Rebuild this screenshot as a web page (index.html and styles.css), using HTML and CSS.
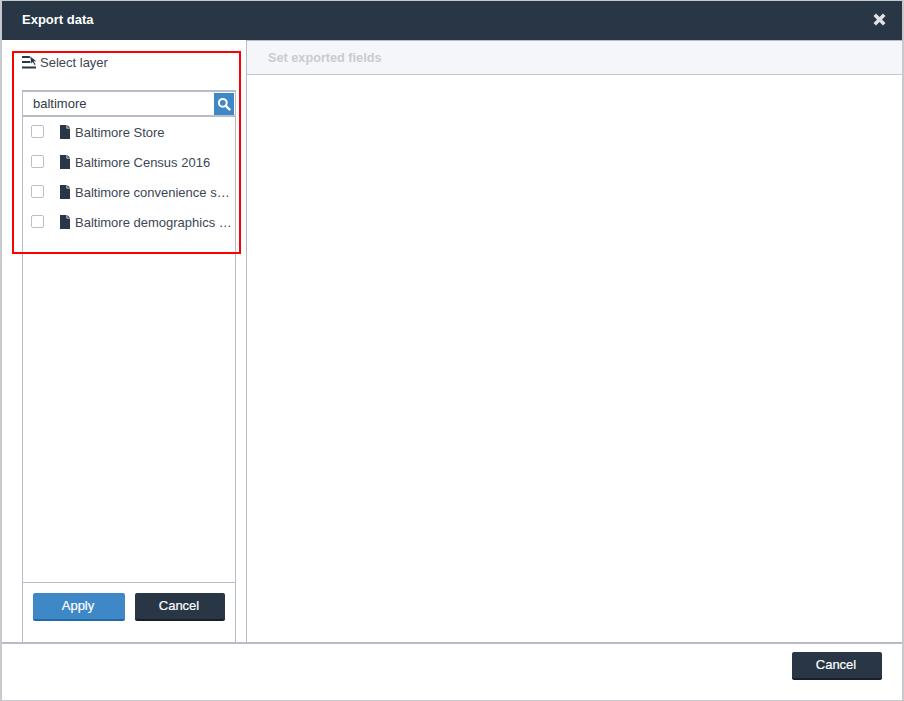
FILE: index.html
```html
<!DOCTYPE html>
<html lang="en">
<head>
<meta charset="utf-8">
<title>Export data</title>
<link rel="stylesheet" href="styles.css">
</head>
<body>
<div class="dialog">
  <header class="titlebar">
    <h1 class="title">Export data</h1>
    <svg class="close" viewBox="0 0 13 13" width="13" height="13"><path d="M3 0.500 6.500 4 10 0.500 12.500 3 9 6.500 12.500 10 10 12.500 6.500 9 3 12.500 0.500 10 4 6.500 0.500 3Z" fill="#dfe2e6"/></svg>
  </header>
  <main class="body">
    <section class="left">
      <div class="layer-head">
        <svg class="layer-icon" viewBox="0 0 15 13" width="15" height="13">
          <path d="M0 1h8.500M0 6h8.500M0 11.500h14" stroke="#283645" stroke-width="2" fill="none"/>
          <path d="M8 0 14.500 5.200 12.200 5.500 13.800 8.600 12.300 9.300 10.800 6.200 9 8Z" fill="#283645" stroke="#fff" stroke-width="0.500"/>
        </svg>
        <span>Select layer</span>
      </div>
      <div class="picker">
        <div class="search">
          <span class="search-text">baltimore</span>
          <span class="search-btn">
            <svg viewBox="0 0 14 14" width="14" height="14"><circle cx="5.800" cy="5.800" r="3.900" fill="none" stroke="#fff" stroke-width="2"/><path d="M8.800 8.800 12.500 12.500" stroke="#fff" stroke-width="2.400" stroke-linecap="round"/></svg>
          </span>
        </div>
        <ul class="list">
          <li class="row"><span class="check"></span><svg class="file" viewBox="0 0 10 14" width="10" height="14"><path d="M0 0H6.500V3.500H10V14H0ZM7.300 0 10 2.700H7.300Z" fill="#283645"/></svg><span class="name">Baltimore Store</span></li>
          <li class="row"><span class="check"></span><svg class="file" viewBox="0 0 10 14" width="10" height="14"><path d="M0 0H6.500V3.500H10V14H0ZM7.300 0 10 2.700H7.300Z" fill="#283645"/></svg><span class="name">Baltimore Census 2016</span></li>
          <li class="row"><span class="check"></span><svg class="file" viewBox="0 0 10 14" width="10" height="14"><path d="M0 0H6.500V3.500H10V14H0ZM7.300 0 10 2.700H7.300Z" fill="#283645"/></svg><span class="name">Baltimore convenience s…</span></li>
          <li class="row"><span class="check"></span><svg class="file" viewBox="0 0 10 14" width="10" height="14"><path d="M0 0H6.500V3.500H10V14H0ZM7.300 0 10 2.700H7.300Z" fill="#283645"/></svg><span class="name">Baltimore demographics …</span></li>
        </ul>
        <div class="picker-actions">
          <button class="btn btn-apply">Apply</button>
          <button class="btn btn-dark btn-cancel-small">Cancel</button>
        </div>
      </div>
    </section>
    <section class="right">
      <div class="fields-head">Set exported fields</div>
    </section>
  </main>
  <footer class="footer">
    <button class="btn btn-dark btn-cancel">Cancel</button>
  </footer>
  <div class="highlight"></div>
</div>
</body>
</html>
```
FILE: styles.css
```css
* { box-sizing: border-box; }
html, body { margin: 0; padding: 0; background: #fff; }
body { width: 904px; height: 701px; overflow: hidden; font-family: "Liberation Sans", Arial, sans-serif; }
.dialog {
  position: relative;
  width: 904px;
  height: 701px;
  display: flex;
  flex-direction: column;
  border-style: solid;
  border-color: #c8c9cc;
  border-width: 1px 2px 1px 2px;
  background: #fff;
}
.titlebar {
  flex: 0 0 39px;
  display: flex;
  align-items: center;
  justify-content: space-between;
  padding: 0 16px 2px 20px;
  background: #283645;
}
.title { margin: 0; font-size: 13px; font-weight: 700; color: #fff; }
.close { display: block; }
.body {
  flex: 0 0 604px;
  display: flex;
  border-bottom: 2px solid #b8bcc6;
}
.left {
  flex: 0 0 245px;
  min-width: 0;
  display: flex;
  flex-direction: column;
  padding: 14px 10px 0 20px;
  border-right: 1px solid #b8bcc6;
}
.layer-head {
  flex: 0 0 36px;
  display: flex;
  align-items: flex-start;
  gap: 3px;
  padding-top: 1px;
  font-size: 13px;
  line-height: 15px;
  color: #3d4654;
}
.layer-icon { display: block; margin-top: 1px; }
.picker {
  flex: 1;
  min-width: 0;
  display: flex;
  flex-direction: column;
  border: 1px solid #b8bcc6;
  border-top-width: 2px;
  border-bottom: 0;
}
.search {
  flex: 0 0 25px;
  display: flex;
  align-items: stretch;
  justify-content: space-between;
  border-bottom: 2px solid #b8bcc6;
  padding: 1px 1px 0 10px;
}
.search-text { font-size: 13px; line-height: 22px; color: #333b47; }
.search-btn {
  flex: 0 0 20px;
  display: flex;
  align-items: center;
  justify-content: center;
  background: #3f88c8;
}
.search-btn svg { display: block; }
.list { flex: 1; margin: 0; padding: 0; list-style: none; min-height: 0; }
.row {
  height: 30px;
  display: flex;
  align-items: center;
  padding-left: 8px;
  font-size: 13px;
  color: #3d4654;
}
.check {
  flex: 0 0 13px;
  height: 13px;
  margin-top: -1px;
  border: 1px solid #bcbfca;
  border-radius: 2px;
  background: #fff;
}
.file { flex: 0 0 10px; margin-left: 16px; margin-top: -1px; }
.name {
  margin-left: 5px;
  white-space: nowrap;
}
.picker-actions {
  flex: 0 0 60px;
  display: flex;
  align-items: flex-start;
  gap: 10px;
  padding: 10px 0 0 10px;
  border-top: 1px solid #b8bcc6;
}
.btn {
  height: 28px;
  padding: 0 2px 1px 0;
  border: 0;
  border-bottom: 2px solid transparent;
  border-radius: 2px;
  font-family: inherit;
  font-size: 13px;
  font-weight: 400;
  color: #fff;
  -webkit-text-stroke: 0.2px #fff;
}
.btn-apply { width: 92px; background: #3f88c8; border-bottom-color: #2269a8; }
.btn-dark { background: #283645; border-bottom-color: #181f29; }
.btn-cancel-small { width: 90px; }
.btn-cancel { width: 90px; }
.right { flex: 1; min-width: 0; }
.fields-head {
  height: 35px;
  padding: 0 21px;
  background: #f5f6f9;
  border-top: 1px solid #b8bcc6;
  border-bottom: 1px solid #c4c7ce;
  font-size: 12.700px;
  font-weight: 700;
  line-height: 34px;
  color: #c8cbd1;
}
.footer {
  flex: 1;
  display: flex;
  justify-content: flex-end;
  align-items: flex-start;
  padding: 8px 20px 0 0;
}
.highlight {
  position: absolute;
  left: 10px;
  top: 50px;
  width: 229px;
  height: 203px;
  border: 2px solid #f00;
  pointer-events: none;
}
```
